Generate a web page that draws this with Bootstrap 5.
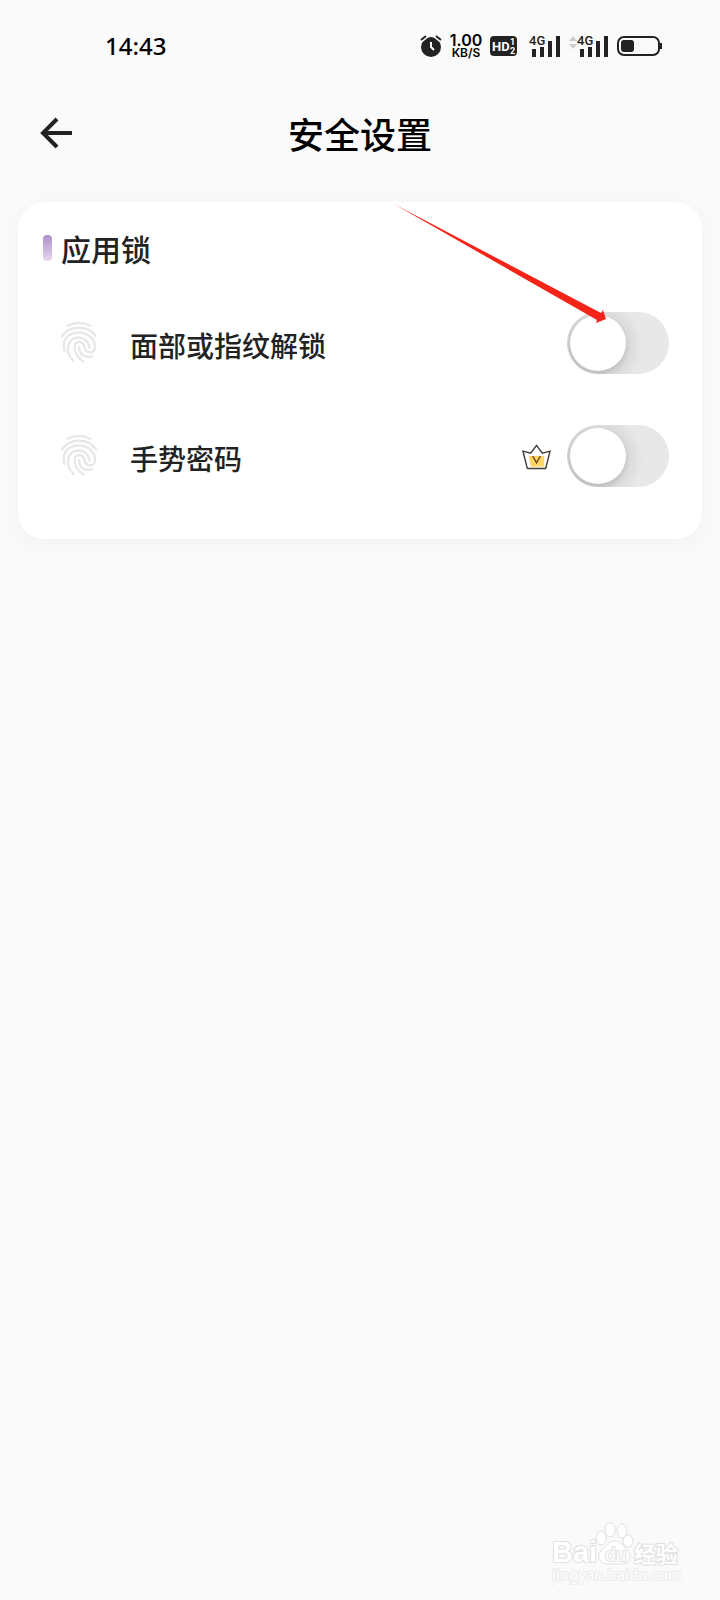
<!DOCTYPE html>
<html lang="zh-CN">
<head>
<meta charset="utf-8">
<meta name="viewport" content="width=device-width, initial-scale=1">
<title>安全设置</title>
<link href="https://cdn.jsdelivr.net/npm/bootstrap@5.3.0/dist/css/bootstrap.min.css" rel="stylesheet">
<style>
  body { background: #fafafa; color: #222; font-family: "Noto Sans", "Noto Sans CJK SC", sans-serif; }
  .screen { min-height: 100vh; }
  .status-bar { height: 92px; padding: 0 58px 0 105px; color: #000; }
  .clock { font: 500 24px/32px "Noto Sans", sans-serif; }
  .speed { width: 32px; font: 600 16px/14px Inter, sans-serif; }
  .speed small { font: 600 12px/12px Inter, sans-serif; }
  .title-bar { height: 82px; padding: 0 36px; }
  .title-bar h1 { font: 500 36px/48px "Noto Sans CJK SC", sans-serif; color: #000; }
  .side { width: 40px; height: 40px; }
  .lock-card { margin: 28px 18px 0; padding: 22px 33px 27px 25px; border: 0; border-radius: 26px; box-shadow: 0 4px 24px rgba(0,0,0,.04); }
  .lock-card h2 { margin: 0 0 0 9px; font: 500 30px/48px "Noto Sans CJK SC", sans-serif; }
  .settings { margin-top: 14px; }
  .accent { width: 9px; height: 26px; border-radius: 4px; background: linear-gradient(#ae8fca, #e4d8ee); }
  .setting { height: 113px; padding-left: 12px; }
  .setting label { margin-left: 27px; padding-top: 4px; font: 500 28px/40px "Noto Sans CJK SC", sans-serif; }
  .toggle.form-check-input { width: 102px; height: 62px; margin: 0; border: 0; border-radius: 31px; background: radial-gradient(circle at 30px 34px, #c2c2c2 26px, #dbdbdb 33px, #e8e8e8 46px); position: relative; box-shadow: none; }
  .toggle::after { content: ""; position: absolute; left: 3px; top: 3px; width: 56px; height: 56px; border-radius: 50%; background: #fff; }
  .toggle:checked::after { left: 43px; }
  .pointer-arrow { left: 376px; top: 2px; pointer-events: none; }
  .brand { padding: 0 38px 12px 0; }
  .brand text { paint-order: stroke; stroke-linejoin: round; }
</style>
</head>
<body>
<svg class="d-none">
  <symbol id="fingerprint" viewBox="0 0 48 48">
    <g fill="none" stroke="#e8e8e8" stroke-width="2.4" stroke-linecap="round">
      <path d="M12.500 6.800Q24 1 35.500 6.800M7.200 17.200C14.500 6 33.500 6 40.800 17.200"/>
      <path d="M9.500 32C6.500 22 12 13.500 24 13.500S42 24 39.500 30.500C37.500 35 31 34 30 29.500C29 24.500 26.500 23 24 23C17 23 18 36 28.500 42.500"/>
      <path d="M18.500 42C12 35 12.500 29 13.500 26C15.500 16 32 15 34.500 28.500M24 28C24 34 28 39.500 37 37.500"/>
    </g>
  </symbol>
  <symbol id="signal" viewBox="0 0 32 24">
    <text x="0" y="11" font-family="Roboto, sans-serif" font-size="13" font-weight="500" fill="#222">4G</text>
    <path fill="#222" d="M3 15h4v8H3zm8-2h4v10h-4zm8-6h4v16h-4zm8-5h4v21h-4z"/>
  </symbol>
</svg>
<div class="screen d-flex flex-column">
  <div class="status-bar d-flex align-items-center justify-content-between">
    <span class="clock">14:43</span>
    <div class="d-flex align-items-center gap-2">
      <svg width="22" height="24" viewBox="0 0 22 24" aria-label="闹钟"><circle cx="11" cy="13" r="10" fill="#222"/><path d="M1 6l6-5M21 6l-6-5" stroke="#fafafa" stroke-width="5"/><path d="M1 6l5-4M21 6l-5-4" stroke="#222" stroke-width="2"/><path d="M11 8v5l3 3" fill="none" stroke="#fff" stroke-width="2"/></svg>
      <div class="speed d-flex flex-column align-items-center"><span>1.00</span><small>KB/S</small></div>
      <svg width="27" height="20" viewBox="0 0 27 20"><rect width="27" height="20" rx="4" fill="#222"/><g fill="#fff" font-family="Roboto, sans-serif" font-weight="700"><text x="2" y="15" font-size="13">HD</text><text x="20" y="9" font-size="9">1</text><text x="20" y="18" font-size="9">2</text></g></svg>
      <svg class="ms-1" width="32" height="24"><use href="#signal" width="32" height="24"/></svg>
      <div class="d-flex"><svg width="8" height="24" viewBox="0 0 8 24"><path fill="#ccc" d="M0 7l4-5 4 5zm0 3l4 5 4-5z"/></svg><svg width="32" height="24"><use href="#signal" width="32" height="24"/></svg></div>
      <svg width="45" height="20" viewBox="0 0 45 20" aria-label="电量"><rect x="1" y="1" width="41" height="18" rx="6" fill="none" stroke="#222" stroke-width="2"/><rect x="4" y="4" width="13" height="12" rx="3" fill="#222"/><path d="M44 7v6" stroke="#222" stroke-width="2"/></svg>
    </div>
  </div>
  <header class="title-bar d-flex align-items-center justify-content-between">
    <button type="button" class="btn p-0 border-0 side d-flex align-items-center" aria-label="返回"><svg width="40" height="40" viewBox="0 0 40 40"><path d="M36 20H7M21 6L7 20l14 14" fill="none" stroke="#222" stroke-width="4"/></svg></button>
    <h1 class="m-0">安全设置</h1>
    <span class="side"></span>
  </header>
  <main class="card lock-card position-relative">
    <div class="d-flex align-items-center"><span class="accent"></span><h2>应用锁</h2></div>
    <div class="settings">
      <div class="setting d-flex align-items-center">
        <svg width="48" height="48"><use href="#fingerprint"/></svg>
        <label for="bio">面部或指纹解锁</label>
        <input class="form-check-input toggle ms-auto" type="checkbox" role="switch" id="bio">
      </div>
      <div class="setting d-flex align-items-center">
        <svg width="48" height="48"><use href="#fingerprint"/></svg>
        <label for="gesture">手势密码</label>
        <svg class="ms-auto me-3" width="29" height="28" viewBox="0 0 30 28"><path fill="#ffd668" d="M7 14h16v11H9z"/><path d="M1 9l8 2 6-8 6 8 8-2-4 16q0 2-2 2H7q-2 0-2-2z" fill="none" stroke="#443c36" stroke-width="1.500"/><path d="M11 14l4 7 4-7" fill="none" stroke="#73481d" stroke-width="1.500"/></svg>
        <input class="form-check-input toggle" type="checkbox" role="switch" id="gesture">
      </div>
    </div>
    <svg class="pointer-arrow position-absolute" width="214" height="122" viewBox="0 0 214 122"><path d="M0 0L207 109 209 106 212 115 202 119 203 116z" fill="#f52419"/></svg>
  </main>
  <footer class="brand mt-auto d-flex justify-content-end">
    <svg width="130" height="66" viewBox="0 0 130 66" font-family="Roboto, 'Noto Sans CJK SC', sans-serif" fill="#fff" stroke="#e0e0e0" stroke-width="2">
      <text x="0" y="40" font-size="29" font-weight="700" font-family="'Liberation Sans', sans-serif">Bai</text>
      <path stroke-width="1" d="M63 19c7 0 9 6 13 10s3 13-6 13H56c-9 0-12-8-7-13s7-10 14-10z"/>
      <g stroke-width="1"><ellipse cx="49" cy="16" rx="5" ry="7"/><ellipse cx="58" cy="8" rx="5" ry="7"/><ellipse cx="70" cy="9" rx="5" ry="7"/><ellipse cx="76" cy="19" rx="5" ry="6"/></g>
      <text x="53" y="39" font-size="19">du</text>
      <text x="82" y="40" font-size="22" font-weight="700" font-family="'Noto Sans CJK SC', sans-serif">经验</text>
      <text x="0" y="58" font-size="15" font-family="'Noto Sans', sans-serif" stroke="#ececec">jingyan.baidu.com</text>
    </svg>
  </footer>
</div>
<script src="https://cdn.jsdelivr.net/npm/bootstrap@5.3.0/dist/js/bootstrap.bundle.min.js"></script>
</body>
</html>
